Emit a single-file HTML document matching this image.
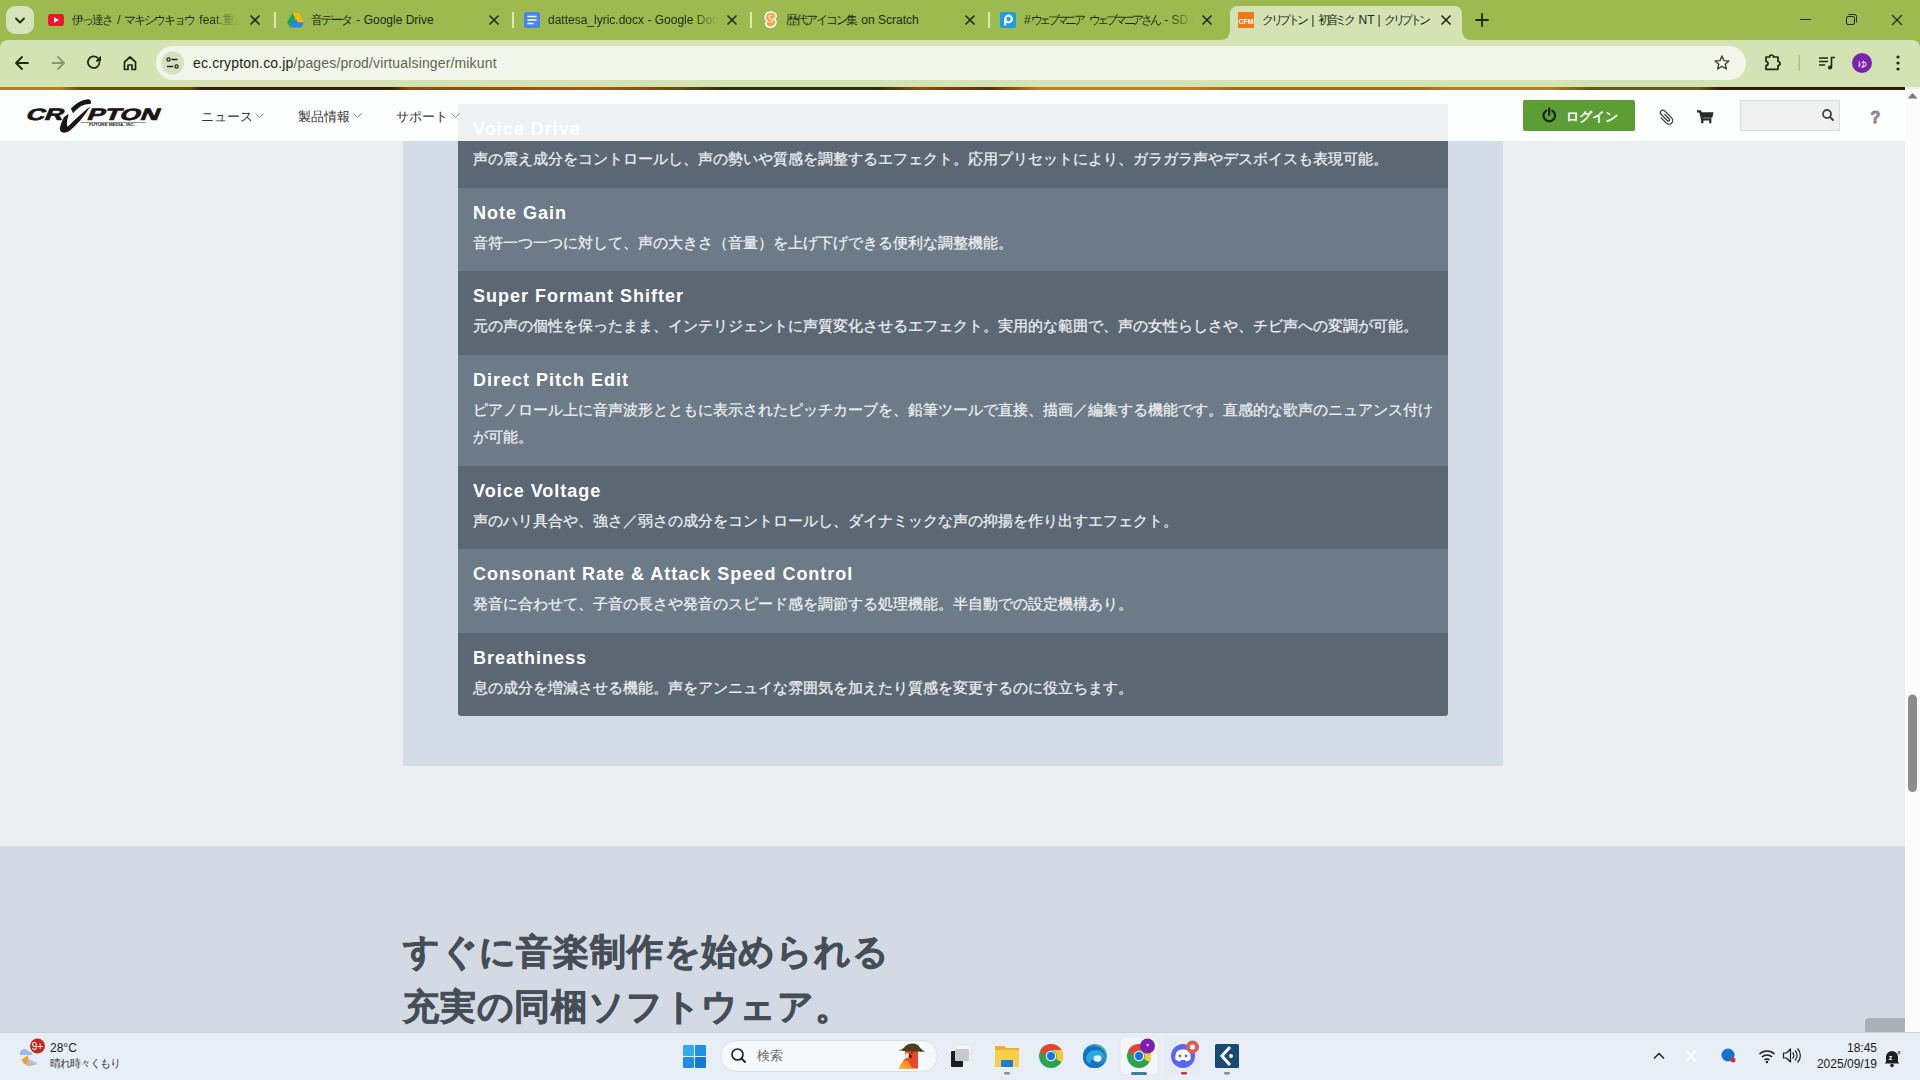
<!DOCTYPE html>
<html><head><meta charset="utf-8">
<style>
*{box-sizing:border-box;margin:0;padding:0}
html,body{width:1920px;height:1080px;overflow:hidden;background:#ebeff2;font-family:"Liberation Sans",sans-serif}
.a{position:absolute}
#tabs{left:0;top:0;width:1920px;height:48px;background:#9dba50}
#toolbar{left:0;top:40px;width:1920px;height:47px;background:#d4e3b4;border-radius:8px 8px 0 0}
#stripe{left:0;top:87px;width:1905px;height:3px;background:linear-gradient(90deg,#b08020 0,#b08020 60px,#6a5010 80px,#6a5010 190px,#3c1c04 200px,#3c1c04 390px,#8a4a10 410px,#a05818 600px,#6a4a10 680px,#3a2c08 720px,#3a2c08 880px,#8a5010 920px,#5a3008 990px,#c08020 1040px,#c08020 1190px,#a06a18 1230px,#a06a18 1420px,#b08020 1450px,#b08020 1550px,#6a5818 1590px,#6a5818 1700px,#3a1c04 1720px,#3a1c04 1905px)}
#page{left:0;top:90px;width:1905px;height:942px;background:#ebeff2;overflow:hidden}
#scroll{left:1905px;top:89px;width:15px;height:943px;background:#fbfbfb}
#taskbar{left:0;top:1032px;width:1920px;height:48px;background:#e7eef6;border-top:1px solid #c8d0d9}
.tab{position:absolute;top:0;height:40px;font-size:12px;color:#1e2a10}
.j{letter-spacing:-2px;margin-right:2px}
.k .j{letter-spacing:-3.3px;margin-right:2.5px}
.tt{position:absolute;top:13px;white-space:nowrap;overflow:hidden;line-height:14px;font-size:12px;color:#1d2a10}
.tx{position:absolute;top:13px;width:14px;height:14px}
.sep{position:absolute;top:12px;width:2px;height:16px;background:#d9e8b0}
.row{position:absolute;left:458px;width:990px;padding:12px 15px 0}
.rt{font-size:18px;font-weight:bold;color:#fff;line-height:27px;white-space:nowrap;letter-spacing:1px}
.rd{font-size:15px;color:#eef1f3;-webkit-text-stroke:0.25px #eef1f3;line-height:27px;white-space:nowrap;position:relative;top:2px}
.big{font-size:36px;font-weight:bold;color:#454d56;line-height:55px;white-space:nowrap;letter-spacing:0.8px;-webkit-text-stroke:0.7px #454d56}
.nav{top:108px;font-size:13px;line-height:17px;color:#333;white-space:nowrap}
</style></head>
<body>
<div id="tabs" class="a"></div>
<div id="toolbar" class="a"></div>
<!-- tab strip -->
<div class="a" style="left:6px;top:6px;width:28px;height:28px;border-radius:9px;background:#d6e3bb"></div>
<svg class="a" style="left:0;top:0" width="1920" height="40" viewBox="0 0 1920 40">
 <path d="M16 18.5l4 4 4-4" fill="none" stroke="#1d2a10" stroke-width="1.8" stroke-linecap="round" stroke-linejoin="round"/>
 <!-- active tab -->
 <path d="M1220 40 Q1230 40 1230 30 L1230 14 Q1230 6 1238 6 L1454 6 Q1462 6 1462 14 L1462 30 Q1462 40 1472 40 Z" fill="#d4e3b4"/>
 <!-- separators -->
 <rect x="274" y="12" width="2" height="16" fill="#dbe9b3"/>
 <rect x="512" y="12" width="2" height="16" fill="#dbe9b3"/>
 <rect x="750" y="12" width="2" height="16" fill="#dbe9b3"/>
 <rect x="988" y="12" width="2" height="16" fill="#dbe9b3"/>
 <!-- close x -->
 <g stroke="#1d2a10" stroke-width="1.6" stroke-linecap="round">
  <path d="M251 16l8 8M259 16l-8 8"/>
  <path d="M490 16l8 8M498 16l-8 8"/>
  <path d="M728 16l8 8M736 16l-8 8"/>
  <path d="M966 16l8 8M974 16l-8 8"/>
  <path d="M1203 16l8 8M1211 16l-8 8"/>
  <path d="M1442 16l8 8M1450 16l-8 8"/>
 </g>
 <!-- plus -->
 <path d="M1482 14v12M1476 20h12" stroke="#1d2a10" stroke-width="1.8" stroke-linecap="round"/>
 <!-- window controls -->
 <path d="M1800 19.5h11" stroke="#1d2a10" stroke-width="1"/>
 <rect x="1846.5" y="16.5" width="8" height="8" rx="1.5" fill="none" stroke="#1d2a10" stroke-width="1"/>
 <path d="M1848.5 14.5h6a2 2 0 0 1 2 2v6" fill="none" stroke="#1d2a10" stroke-width="1"/>
 <path d="M1892 15l10 10M1902 15l-10 10" stroke="#1d2a10" stroke-width="1.1"/>
 <!-- youtube icon -->
 <rect x="48" y="14" width="16" height="12" rx="3" fill="#e8172d"/>
 <path d="M54 17.2v5.6l4.8-2.8z" fill="#fff"/>
 <!-- drive icon -->
 <path d="M290 25l3-5h10l-3 5z" fill="#2d7df0"/>
 <path d="M287 22.5l5.5-9.5 2.8 5-5.3 9z" fill="#1ea362"/>
 <path d="M292.5 13h6l5.5 9.5h-6z" fill="#ffba00"/>
 <path d="M290 27.5l2.8-5h11.2l-2.8 5z" fill="#2684fc"/>
 <!-- docs icon -->
 <rect x="524" y="12" width="16" height="16" rx="2.5" fill="#4a86e8"/>
 <path d="M527.5 16.5h9M527.5 20h9M527.5 23.5h6" stroke="#fff" stroke-width="1.6"/>
 <!-- scratch icon -->
 <path d="M767 13c4-2 8-1 9 2 1 2-1 3-2 4 2 1 3 3 1 6-2 3-7 3-9 0-1-2 0-3 1-4-2-1-3-5 0-8z" fill="#f6a550" stroke="#fff" stroke-width="1.5"/>
 <path d="M772 15.5c-2-0.5-3.5 0.5-3 2 0.5 1.5 3.5 1.5 3.5 3.5 0 1.5-2 2-3.5 1" fill="none" stroke="#fff" stroke-width="1"/>
 <!-- pixiv icon -->
 <rect x="1000" y="12" width="16" height="16" rx="2.5" fill="#1e9be6"/>
 <circle cx="1008.5" cy="19" r="3.3" fill="none" stroke="#fff" stroke-width="2.2"/>
 <path d="M1005.2 19v6.5" stroke="#fff" stroke-width="2.2"/>
 <!-- CFM icon -->
 <rect x="1238" y="12" width="16" height="16" fill="#f07818"/>
 <text x="1246" y="23.5" font-family="Liberation Sans" font-size="7" font-weight="bold" fill="#fff" text-anchor="middle">CFM</text>
</svg>
<div class="tt" style="left:72px;width:166px;-webkit-mask-image:linear-gradient(90deg,#000 140px,transparent 166px)"><span class="j">伊っ達さ</span> / <span class="j">マキシウキョウ</span> feat.<span class="j">重音テト</span></div>
<div class="tt" style="left:311px;width:170px"><span class="j">音データ</span> - Google Drive</div>
<div class="tt" style="left:548px;width:170px;-webkit-mask-image:linear-gradient(90deg,#000 145px,transparent 170px)">dattesa_lyric.docx - Google Docs</div>
<div class="tt" style="left:786px;width:170px"><span class="j">歴代アイコン集</span> on Scratch</div>
<div class="tt k" style="left:1024px;width:170px;-webkit-mask-image:linear-gradient(90deg,#000 145px,transparent 170px)">#<span class="j">ウェブマニア</span> <span class="j">ウェブマニアさん</span> - SD / <span class="j">ウェブ</span></div>
<div class="tt k" style="left:1262px;width:178px"><span class="j">クリプトン</span> | <span class="j">初音ミク</span> NT | <span class="j">クリプトン</span></div>
<!-- toolbar icons -->
<svg class="a" style="left:0;top:40px" width="1920" height="47" viewBox="0 40 1920 47">
 <path d="M28 63H16.5M22 57l-6 6 6 6" fill="none" stroke="#1d2a10" stroke-width="1.8" stroke-linecap="round" stroke-linejoin="round"/>
 <path d="M64 63H52.5M58 57l6 6-6 6" fill="none" stroke="#8a9a70" stroke-width="1.8" stroke-linecap="round" stroke-linejoin="round"/>
 <path d="M99.5 62.5a5.8 5.8 0 1 1-1.8-4.6" fill="none" stroke="#1d2a10" stroke-width="1.8" stroke-linecap="round"/>
 <path d="M100.5 56.5v4.5h-4.5z" fill="#1d2a10" stroke="#1d2a10" stroke-width="1" stroke-linejoin="round"/>
 <path d="M124.5 69.5v-7.5l5.5-5 5.5 5v7.5h-3.5v-4.5h-4v4.5z" fill="none" stroke="#1d2a10" stroke-width="1.7" stroke-linejoin="round"/>
 <rect x="156" y="46" width="1590" height="34" rx="17" fill="#f2f6ea"/>
 <circle cx="172.5" cy="63" r="11.5" fill="#d7e1c0"/>
 <circle cx="168.5" cy="59.5" r="1.6" fill="none" stroke="#1d2a10" stroke-width="1.2"/>
 <path d="M171.5 59.5h6M167 66.5h6" stroke="#1d2a10" stroke-width="1.3"/>
 <circle cx="176.5" cy="66.5" r="1.6" fill="none" stroke="#1d2a10" stroke-width="1.2"/>
 <path d="M1722 56l2 4.6 4.9 0.4-3.7 3.2 1.2 4.8-4.4-2.6-4.4 2.6 1.2-4.8-3.7-3.2 4.9-0.4z" fill="none" stroke="#3c4533" stroke-width="1.4" stroke-linejoin="round"/>
 <path d="M1766 57h3.5a2 2 0 0 1 4 0h4.5v4.5a2 2 0 0 1 0 4v3.8h-12v-3.8a2 2 0 0 0 0-4z" fill="none" stroke="#1d2a10" stroke-width="1.7" stroke-linejoin="round"/>
 <rect x="1798.5" y="55" width="1.3" height="16" fill="#a9bd72"/>
 <path d="M1819 58h9M1819 61.5h9M1819 65h6" stroke="#1d2a10" stroke-width="1.6"/>
 <path d="M1831.5 67.5v-10h3.5" fill="none" stroke="#1d2a10" stroke-width="1.6"/>
 <circle cx="1830" cy="67.5" r="2" fill="#1d2a10"/>
 <circle cx="1862" cy="63" r="10" fill="#7b22aa"/>
 <text x="1862" y="66.5" font-family="Liberation Sans" font-size="9" fill="#fff" text-anchor="middle">ゆ</text>
 <circle cx="1898" cy="57" r="1.6" fill="#1d2a10"/><circle cx="1898" cy="63" r="1.6" fill="#1d2a10"/><circle cx="1898" cy="69" r="1.6" fill="#1d2a10"/>
</svg>
<div class="a" style="left:193px;top:55px;font-size:14px;line-height:16px;color:#1b2412;white-space:nowrap;letter-spacing:0.15px">ec.crypton.co.jp<span style="color:#5c6650">/pages/prod/virtualsinger/mikunt</span></div>

<div id="stripe" class="a"></div>
<div id="page" class="a"></div>
<div class="a" style="left:403px;top:141px;width:1100px;height:625px;background:#d3dbe4;border-radius:0 0 3px 3px"></div>
<div class="row" style="top:104px;height:84px;background:#5b6874;"><div class="rt">Voice Drive</div><div class="rd">声の震え成分をコントロールし、声の勢いや質感を調整するエフェクト。応用プリセットにより、ガラガラ声やデスボイスも表現可能。</div></div>
<div class="row" style="top:188px;height:83px;background:#6c7b87;"><div class="rt">Note Gain</div><div class="rd">音符一つ一つに対して、声の大きさ（音量）を上げ下げできる便利な調整機能。</div></div>
<div class="row" style="top:271px;height:84px;background:#5b6874;"><div class="rt">Super Formant Shifter</div><div class="rd">元の声の個性を保ったまま、インテリジェントに声質変化させるエフェクト。実用的な範囲で、声の女性らしさや、チビ声への変調が可能。</div></div>
<div class="row" style="top:355px;height:111px;background:#6c7b87;"><div class="rt">Direct Pitch Edit</div><div class="rd">ピアノロール上に音声波形とともに表示されたピッチカーブを、鉛筆ツールで直接、描画／編集する機能です。直感的な歌声のニュアンス付け<br>が可能。</div></div>
<div class="row" style="top:466px;height:83px;background:#5b6874;"><div class="rt">Voice Voltage</div><div class="rd">声のハリ具合や、強さ／弱さの成分をコントロールし、ダイナミックな声の抑揚を作り出すエフェクト。</div></div>
<div class="row" style="top:549px;height:84px;background:#6c7b87;"><div class="rt">Consonant Rate &amp; Attack Speed Control</div><div class="rd">発音に合わせて、子音の長さや発音のスピード感を調節する処理機能。半自動での設定機構あり。</div></div>
<div class="row" style="top:633px;height:83px;background:#5b6874;border-radius:0 0 3px 3px;"><div class="rt">Breathiness</div><div class="rd">息の成分を増減させる機能。声をアンニュイな雰囲気を加えたり質感を変更するのに役立ちます。</div></div>
<div class="a" style="left:0;top:846px;width:1905px;height:186px;background:#d3dae3"></div>
<div class="a big" style="left:403px;top:924px">すぐに音楽制作を始められる<br>充実の同梱ソフトウェア。</div>
<div class="a" style="left:1865px;top:1018px;width:40px;height:14px;background:#a9b1b6;border-radius:4px 0 0 0"></div>
<div class="a" style="left:0;top:90px;width:1905px;height:51px;background:rgba(255,255,255,0.9)"></div>
<svg class="a" style="left:0;top:90px" width="180" height="50" viewBox="0 90 180 50">
 <g font-family="Liberation Sans" font-weight="bold" fill="#1a1414" stroke="#1a1414" stroke-width="0.7" transform="translate(0 120) skewX(-22) translate(0 -120)">
  <text x="25" y="120" font-size="16.5" textLength="37" lengthAdjust="spacingAndGlyphs">CR</text>
  <text x="86" y="120" font-size="16.5" textLength="72" lengthAdjust="spacingAndGlyphs">PTON</text>
 </g>
 <path d="M64 117 L68.8 113.8 C67.2 119.5 66.2 123.5 67.6 126.8 C72.5 122.5 80.5 114 90.2 106.6 C84.5 116 76.5 126 68.5 131.6 C63 134.2 59.2 132 60 127.5 C60.8 124 62.3 120.5 64 117 Z" fill="#1a1414"/>
 <path d="M70.8 108.6 C75.5 103.8 81.5 99.8 87.8 99.2 C90.6 99 91.4 100.8 90.8 103.8 L87.2 104.2 C81.8 104.6 77.2 108.4 73.2 113.2 Z" fill="#1a1414"/>
 <path d="M81 122.5h65" stroke="#666" stroke-width="0.7"/>
 <text x="89" y="126.3" font-family="Liberation Sans" font-weight="bold" font-size="3" fill="#222" textLength="46" lengthAdjust="spacingAndGlyphs">FUTURE MEDIA, INC.</text>
</svg>
<div class="a nav" style="left:201px">ニュース</div>
<div class="a nav" style="left:298px">製品情報</div>
<div class="a nav" style="left:396px">サポート</div>
<svg class="a" style="left:0;top:90px" width="1905" height="51" viewBox="0 90 1905 51">
 <g fill="none" stroke="#888" stroke-width="1">
  <path d="M255.5 113.5l4 4 4-4M353.5 113.5l4 4 4-4M451.5 113.5l4 4 4-4"/>
 </g>
 <rect x="1523" y="100" width="112" height="31" rx="2" fill="#5c9d35"/>
 <path d="M1546.2 110.6a5.8 5.8 0 1 0 6.1 0" fill="none" stroke="#13280a" stroke-width="2.2" stroke-linecap="round"/>
 <path d="M1549.2 108.5v6.5" stroke="#13280a" stroke-width="2.2" stroke-linecap="round"/>
 <g transform="translate(1665.5 117) rotate(-45) scale(0.82)">
  <path d="M1.5 -3 L1.5 5 A1.5 1.5 0 0 1 -1.5 5 L-1.5 -6 A3 3 0 0 1 4.5 -6 L4.5 6 A4.5 4.5 0 0 1 -4.5 6 L-4.5 -3" fill="none" stroke="#333" stroke-width="1.5" stroke-linecap="round"/>
 </g>
 <path d="M1697 111.3h3.2l1.8 8h9" fill="none" stroke="#2a2a2a" stroke-width="2.2" stroke-linejoin="round"/>
 <path d="M1700.5 112.2h13l-1.2 5.6h-10.6z" fill="#2a2a2a"/>
 <path d="M1702.3 118.5v4.8M1710.3 118.5v4.8" stroke="#2a2a2a" stroke-width="2.2"/>
 <rect x="1740.5" y="100.5" width="99" height="30" fill="#f0f0f0" stroke="#dcdcdc"/>
 <circle cx="1827" cy="114" r="4" fill="none" stroke="#444" stroke-width="1.8"/>
 <path d="M1830 117l3 3" stroke="#444" stroke-width="2" stroke-linecap="round"/>
 <text x="1875.5" y="122.8" font-family="Liberation Sans" font-weight="bold" font-size="16" fill="#8a8a8a" stroke="#8a8a8a" stroke-width="0.9" text-anchor="middle">?</text>
</svg>
<div class="a" style="left:1566px;top:108px;font-size:13px;font-weight:bold;color:#fff;line-height:17px">ログイン</div>

<div id="scroll" class="a"></div>
<svg class="a" style="left:1905px;top:90px" width="15" height="942" viewBox="1905 90 15 942">
 <path d="M1907.5 98.5l5-5.5 5 5.5z" fill="#7a7a7a"/>
 <rect x="1908" y="694.5" width="9" height="97.5" rx="4.5" fill="#8c8c8c"/>
</svg>
<div id="taskbar" class="a"></div>
<svg class="a" style="left:0;top:1032px" width="1920" height="48" viewBox="0 1032 1920 48">
 <!-- weather icon -->
 <path d="M20 1053.5a4.5 4.5 0 0 1 8.5-2 3.5 3.5 0 0 1 4 3.5h-12.5z" fill="#9cb8e8"/>
 <path d="M21.5 1059.5a9 9 0 0 0 14 4.5a7 7 0 0 1-7-9z" fill="#f0a030"/>
 <path d="M27 1063a3.5 3.5 0 0 1 6.5-1.5a3 3 0 0 1 3.5 3h-10z" fill="#a8c4ee"/>
 <circle cx="37.5" cy="1046" r="7.5" fill="#c42b1c"/>
 <text x="37.5" y="1050" font-family="Liberation Sans" font-size="10" fill="#fff" text-anchor="middle">9+</text>
 <!-- windows logo -->
 <g fill="#1a8fe0">
  <rect x="683" y="1045" width="11" height="11" rx="1" fill="#36a8ee"/>
  <rect x="695" y="1045" width="11" height="11" rx="1" fill="#1e90e6"/>
  <rect x="683" y="1057" width="11" height="11" rx="1" fill="#1e8ee4"/>
  <rect x="695" y="1057" width="11" height="11" rx="1" fill="#1478d4"/>
 </g>
 <!-- search box -->
 <rect x="720.5" y="1040.5" width="217" height="31" rx="15.5" fill="#f6f9fc" stroke="#d9dfe6"/>
 <circle cx="737.5" cy="1054.5" r="5.5" fill="none" stroke="#1f1f1f" stroke-width="1.6"/>
 <path d="M741.5 1058.5l3.5 3.5" stroke="#1f1f1f" stroke-width="1.8" stroke-linecap="round"/>
 <!-- parrot -->
 <defs><linearGradient id="pg" x1="0" y1="1" x2="1" y2="0"><stop offset="0" stop-color="#f6c020"/><stop offset="1" stop-color="#f06a20"/></linearGradient></defs>
 <path d="M905 1051 L918 1051 L918 1068.5 L899 1068.5 C901 1064 904 1060 906 1058 Z" fill="#e64a28"/>
 <path d="M899 1068.5 C900.5 1064 903.5 1061 907.5 1059.8 L912.5 1068.5 Z" fill="url(#pg)"/>
 <path d="M898 1050 C901 1050.5 903 1049 905.5 1046 C908 1043 915 1042.5 918 1045 C920 1048 921.5 1050 925 1051.5 C921 1052 919 1051.5 917 1051.5 L905 1051.2 C902.5 1051.2 900.5 1050.8 898 1050 Z" fill="#4d3f1c"/>
 <ellipse cx="907.3" cy="1055.5" rx="1.5" ry="2.8" fill="#f2e6d6"/>
 <path d="M909 1053.5 L912.3 1056 L911 1058.5 L909 1057.2 Z" fill="#3a2a1a"/>
 <circle cx="911.8" cy="1052.8" r="0.8" fill="#222"/>
 <!-- task view -->
 <rect x="955" y="1045" width="16" height="15" rx="1.5" fill="#f4f6f8" stroke="#e0e4e8" stroke-width="0.8"/>
 <rect x="951" y="1051" width="12" height="16" rx="1" fill="#1d1d1d"/>
 <rect x="955" y="1049" width="14" height="12" rx="1" fill="#c8cacc"/>
 <!-- explorer -->
 <path d="M995 1046h9l2 2h13v19h-24z" fill="#e6b030"/>
 <rect x="995" y="1050" width="24" height="17" rx="1" fill="#f8d048"/>
 <rect x="1001" y="1060" width="12" height="7" rx="1" fill="#1f7bd4"/>
 <rect x="1004" y="1072" width="6" height="2.6" rx="1.3" fill="#8a8f96"/>
 <!-- chrome -->
 <g transform="translate(1051 1056)">
  <circle r="12" fill="#2ba24c"/>
  <path d="M0 -12A12 12 0 0 1 10.4 6L5.2 3A6 6 0 0 0 0 -6z" fill="#fcc934"/>
  <path d="M-10.4 -6A12 12 0 0 1 10.4 -6H0A6 6 0 0 0 -5.2 3z" fill="#e94235"/>
  <circle r="5.2" fill="#fff"/><circle r="4.2" fill="#1a73e8"/>
 </g>
 <!-- edge -->
 <defs>
  <linearGradient id="eg" x1="0" y1="1" x2="1" y2="0"><stop offset="0" stop-color="#0b4fa0"/><stop offset="0.55" stop-color="#1a8ad8"/><stop offset="1" stop-color="#4fd36a"/></linearGradient>
 </defs>
 <g transform="translate(1095 1056)">
  <circle r="12" fill="url(#eg)"/>
  <path d="M-12 1c0-6 5-11 11-11 6 0 11 4 11 9 0 3-3 5-6 5h-6c1 2 3 4 7 4 2 0 4-1 5-2-2 4-6 6-11 6-7 0-11-5-11-11z" fill="#1670c8"/>
  <path d="M-9 2c1-5 5-8 10-8 5 0 8 3 8 6 0 2-2 3-4 3h-5c-3 0-5 2-5 5-2-1-4-3-4-6z" fill="#2aa8e0"/>
  <ellipse cx="2.5" cy="2.5" rx="4" ry="3.2" fill="#e8eef6"/>
 </g>
 <!-- chrome 2 active -->
 <rect x="1120" y="1037" width="38" height="38" rx="4" fill="#f2f6fb" stroke="#dfe5ec" stroke-width="0.8"/>
 <g transform="translate(1139 1056)">
  <circle r="12" fill="#2ba24c"/>
  <path d="M0 -12A12 12 0 0 1 10.4 6L5.2 3A6 6 0 0 0 0 -6z" fill="#fcc934"/>
  <path d="M-10.4 -6A12 12 0 0 1 10.4 -6H0A6 6 0 0 0 -5.2 3z" fill="#e94235"/>
  <circle r="5.2" fill="#fff"/><circle r="4.2" fill="#1a73e8"/>
 </g>
 <circle cx="1147.5" cy="1046" r="7.5" fill="#7a1fb0"/>
 <path d="M1146 1044h3l-1 3z" fill="#e6c8f6"/>
 <rect x="1131" y="1072" width="16" height="3" rx="1.5" fill="#3e7e96"/>
 <!-- discord -->
 <rect x="1164" y="1037" width="36" height="38" rx="4" fill="#e6ebf2"/>
 <circle cx="1183" cy="1056" r="12" fill="#5865f2"/>
 <path d="M1176.5 1052c2-2 4-2.5 6.5-2.5s4.5 0.5 6.5 2.5c1 2 1.5 5 1 7.5-1.5 1-3 1.8-4.5 2l-1-1.5h-4l-1 1.5c-1.5-0.2-3-1-4.5-2-0.5-2.5 0-5.5 1-7.5z" fill="#fff"/>
 <circle cx="1180" cy="1056" r="1.4" fill="#5865f2"/><circle cx="1186" cy="1056" r="1.4" fill="#5865f2"/>
 <circle cx="1192.5" cy="1047" r="6.5" fill="#e05a5a"/>
 <circle cx="1192.5" cy="1047" r="2.6" fill="#fff"/>
 <rect x="1181" y="1072" width="6" height="2.6" rx="1.3" fill="#c0302e"/>
 <!-- cubase -->
 <rect x="1215" y="1044" width="24" height="24" rx="1.5" fill="#1a4a72"/>
 <path d="M1230 1047l-8 9 8 9" fill="none" stroke="#fff" stroke-width="3"/>
 <circle cx="1231" cy="1056" r="2" fill="#fff"/>
 <rect x="1224" y="1072" width="6" height="2.6" rx="1.3" fill="#8a8f96"/>
 <!-- tray -->
 <path d="M1654 1058.5l5-5 5 5" fill="none" stroke="#1f1f1f" stroke-width="1.5"/>
 <path d="M1686 1050l10 12M1696 1050l-10 12" stroke="#ffffff" stroke-width="2"/>
 <circle cx="1728" cy="1055" r="6.5" fill="#1a6fd0"/>
 <circle cx="1733" cy="1060" r="2.5" fill="#d83030"/>
 <path d="M1759.5 1054a11 11 0 0 1 15 0M1762 1057a7 7 0 0 1 10 0M1764.5 1060a3.5 3.5 0 0 1 5 0" fill="none" stroke="#1f1f1f" stroke-width="1.5"/>
 <circle cx="1767" cy="1062" r="1.2" fill="#1f1f1f"/>
 <path d="M1783.5 1053h3l4-4v13l-4-4h-3z" fill="none" stroke="#1f1f1f" stroke-width="1.2" stroke-linejoin="round"/>
 <path d="M1792.5 1052.5a4 4 0 0 1 0 6M1795 1050.5a7 7 0 0 1 0 10M1797.5 1048.5a10 10 0 0 1 0 14" fill="none" stroke="#1f1f1f" stroke-width="1.2"/>
 <path d="M1886 1062v-5a6 6 0 0 1 12 0v5l1.5 1.5h-15z" fill="#1f1f1f"/>
 <circle cx="1892" cy="1065.5" r="1.8" fill="#1f1f1f"/>
 <text x="1890.5" y="1060" font-family="Liberation Sans" font-size="7" font-weight="bold" fill="#fff" text-anchor="middle">z</text>
 <text x="1897.5" y="1054" font-family="Liberation Sans" font-size="6" font-weight="bold" fill="#1f1f1f">z</text>
</svg>
<div class="a" style="left:50px;top:1041px;font-size:12px;line-height:14px;color:#1a1a1a">28°C</div>
<div class="a" style="left:50px;top:1056px;font-size:11px;line-height:14px;color:#3a3a3a;letter-spacing:-1px">晴れ時々くもり</div>
<div class="a" style="left:757px;top:1048px;font-size:13px;line-height:15px;color:#6a6a6a">検索</div>
<div class="a" style="left:1800px;top:1041px;width:77px;text-align:right;font-size:12px;line-height:14px;color:#1a1a1a">18:45</div>
<div class="a" style="left:1800px;top:1057px;width:77px;text-align:right;font-size:12px;line-height:14px;color:#1a1a1a">2025/09/19</div>

</body></html>
